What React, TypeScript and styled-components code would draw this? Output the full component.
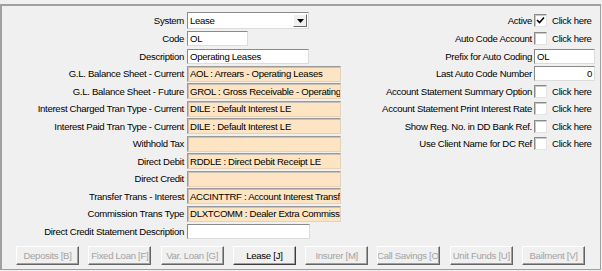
import React from 'react';
import styled, { createGlobalStyle } from 'styled-components';

const Global = createGlobalStyle`
  html, body { margin: 0; padding: 0; background: #f0f0f0; }
  body {
    font-family: "Liberation Sans", Arial, sans-serif;
    font-size: 9.6px;
    letter-spacing: -0.3px;
    color: #000;
  }
`;

const Frame = styled.div`
  box-sizing: border-box;
  margin-top: 4px;
  width: 601px;
  height: 266px;
  border-top: 2px solid #a0a0a0;
  border-left: 2px solid #a0a0a0;
  border-right: 1px solid #a0a0a0;
  border-bottom: 1px solid #a0a0a0;
  background: #f0f0f0;
  display: flex;
  flex-direction: column;
`;

const Columns = styled.div`
  display: flex;
  padding-top: 6.2px;
`;

const LeftForm = styled.div`
  display: grid;
  grid-template-columns: 182px 154px;
  grid-auto-rows: 17.56px;
  column-gap: 3px;
`;

const RightForm = styled.div`
  flex: 1;
  display: grid;
  grid-template-columns: 1fr 61px;
  grid-auto-rows: 17.56px;
  column-gap: 2px;
  padding-right: 5px;
`;

const Label = styled.div`
  display: flex;
  align-items: center;
  justify-content: flex-end;
  white-space: nowrap;
`;

const Cell = styled.div`
  display: flex;
  align-items: center;
`;

const TextBox = styled.div<{ $w: number; $align?: string }>`
  box-sizing: border-box;
  width: ${p => p.$w}px;
  height: 15px;
  background: #fff;
  border: 1px solid;
  border-color: #8a8a8a #dcdcdc #dcdcdc #8a8a8a;
  padding: 0 2px;
  display: flex;
  align-items: center;
  justify-content: ${p => (p.$align === 'right' ? 'flex-end' : 'flex-start')};
  white-space: nowrap;
  overflow: hidden;
`;

const Lookup = styled.div`
  box-sizing: border-box;
  width: 154px;
  height: 16px;
  background: #fde4c2;
  border-top: 1px solid #9a9a9a;
  border-left: 1px solid #9a9a9a;
  border-right: 1px solid #e6d2b6;
  border-bottom: 1px solid #e6d2b6;
  box-shadow: inset 1px 1px 0 #c8c0b4;
  padding: 0 2px;
  display: flex;
  align-items: center;
  white-space: nowrap;
  overflow: hidden;
`;

const SelectBox = styled.div`
  box-sizing: border-box;
  width: 122px;
  height: 17px;
  background: #fff;
  border: 1px solid;
  border-color: #8a8a8a #dcdcdc #dcdcdc #8a8a8a;
  display: flex;
  align-items: center;
  padding-left: 2px;
`;

const SelectText = styled.span`
  flex: 1;
`;

const DropButton = styled.div`
  box-sizing: border-box;
  width: 14px;
  height: 13px;
  margin-right: 1px;
  background: #f0f0f0;
  border: 1px solid;
  border-color: #fff #696969 #696969 #fff;
  display: flex;
  align-items: center;
  justify-content: center;
`;

const CheckBox = styled.div`
  box-sizing: border-box;
  width: 13px;
  height: 13px;
  background: #fff;
  border: 1px solid;
  border-color: #8a8a8a #e3e3e3 #e3e3e3 #8a8a8a;
  box-shadow: inset 1px 1px 0 #c8c8c8;
  display: flex;
  align-items: center;
  justify-content: center;
`;

const CheckText = styled.span`
  margin-left: 5px;
  white-space: nowrap;
`;

const ButtonBar = styled.div`
  display: flex;
  gap: 9.3px;
  margin-top: 6px;
  margin-left: 14px;
`;

const ActionButton = styled.div<{ $active?: boolean }>`
  box-sizing: border-box;
  width: 63px;
  height: 19px;
  background: #f0f0f0;
  color: ${p => (p.$active ? '#000' : '#a3a3a3')};
  border: 1px solid;
  border-color: ${p => (p.$active ? '#fff #3c3c3c #3c3c3c #fff' : '#fff #646464 #646464 #fff')};
  box-shadow: inset -1px -1px 0 #a0a0a0;
  display: flex;
  align-items: center;
  justify-content: center;
  overflow: hidden;
  white-space: nowrap;
`;

type LeftRow =
  | { label: string; kind: 'select'; value: string }
  | { label: string; kind: 'text'; value: string; w: number }
  | { label: string; kind: 'lookup'; value: string };

const leftRows: LeftRow[] = [
  { label: 'System', kind: 'select', value: 'Lease' },
  { label: 'Code', kind: 'text', value: 'OL', w: 61 },
  { label: 'Description', kind: 'text', value: 'Operating Leases', w: 122 },
  { label: 'G.L. Balance Sheet - Current', kind: 'lookup', value: 'AOL : Arrears - Operating Leases' },
  { label: 'G.L. Balance Sheet - Future', kind: 'lookup', value: 'GROL : Gross Receivable - Operating Leases' },
  { label: 'Interest Charged Tran Type - Current', kind: 'lookup', value: 'DILE : Default Interest LE' },
  { label: 'Interest Paid Tran Type - Current', kind: 'lookup', value: 'DILE : Default Interest LE' },
  { label: 'Withhold Tax', kind: 'lookup', value: '' },
  { label: 'Direct Debit', kind: 'lookup', value: 'RDDLE : Direct Debit Receipt LE' },
  { label: 'Direct Credit', kind: 'lookup', value: '' },
  { label: 'Transfer Trans - Interest', kind: 'lookup', value: 'ACCINTTRF : Account Interest Transfer' },
  { label: 'Commission Trans Type', kind: 'lookup', value: 'DLXTCOMM : Dealer Extra Commission' },
  { label: 'Direct Credit Statement Description', kind: 'text', value: '', w: 123 },
];

type RightRow =
  | { label: string; kind: 'check'; checked?: boolean }
  | { label: string; kind: 'text'; value: string; align?: string };

const rightRows: RightRow[] = [
  { label: 'Active', kind: 'check', checked: true },
  { label: 'Auto Code Account', kind: 'check' },
  { label: 'Prefix for Auto Coding', kind: 'text', value: 'OL' },
  { label: 'Last Auto Code Number', kind: 'text', value: '0', align: 'right' },
  { label: 'Account Statement Summary Option', kind: 'check' },
  { label: 'Account Statement Print Interest Rate', kind: 'check' },
  { label: 'Show Reg. No. in DD Bank Ref.', kind: 'check' },
  { label: 'Use Client Name for DC Ref', kind: 'check' },
];

const buttons = [
  { text: 'Deposits [B]' },
  { text: 'Fixed Loan [F]' },
  { text: 'Var. Loan [G]' },
  { text: 'Lease [J]', active: true },
  { text: 'Insurer [M]' },
  { text: 'Call Savings [O]' },
  { text: 'Unit Funds [U]' },
  { text: 'Bailment [V]' },
];

const DownArrow = () => (
  <svg width="7" height="4" viewBox="0 0 7 4">
    <path d="M0 0 H7 L3.5 4 Z" fill="#000" />
  </svg>
);

const Tick = () => (
  <svg width="9" height="9" viewBox="0 0 9 9">
    <path d="M1 4 L3.5 6.5 L8 1.5" stroke="#000" strokeWidth="1.6" fill="none" />
  </svg>
);

export default function App() {
  return (
    <>
      <Global />
      <Frame>
        <Columns>
          <LeftForm>
            {leftRows.map(r => (
              <React.Fragment key={r.label}>
                <Label>{r.label}</Label>
                <Cell>
                  {r.kind === 'select' && (
                    <SelectBox>
                      <SelectText>{r.value}</SelectText>
                      <DropButton>
                        <DownArrow />
                      </DropButton>
                    </SelectBox>
                  )}
                  {r.kind === 'text' && <TextBox $w={r.w}>{r.value}</TextBox>}
                  {r.kind === 'lookup' && <Lookup>{r.value}</Lookup>}
                </Cell>
              </React.Fragment>
            ))}
          </LeftForm>
          <RightForm>
            {rightRows.map(r => (
              <React.Fragment key={r.label}>
                <Label>{r.label}</Label>
                <Cell>
                  {r.kind === 'check' ? (
                    <>
                      <CheckBox>{r.checked && <Tick />}</CheckBox>
                      <CheckText>Click here</CheckText>
                    </>
                  ) : (
                    <TextBox $w={61} $align={r.align}>
                      {r.value}
                    </TextBox>
                  )}
                </Cell>
              </React.Fragment>
            ))}
          </RightForm>
        </Columns>
        <ButtonBar>
          {buttons.map(b => (
            <ActionButton key={b.text} $active={b.active}>
              {b.text}
            </ActionButton>
          ))}
        </ButtonBar>
      </Frame>
    </>
  );
}
